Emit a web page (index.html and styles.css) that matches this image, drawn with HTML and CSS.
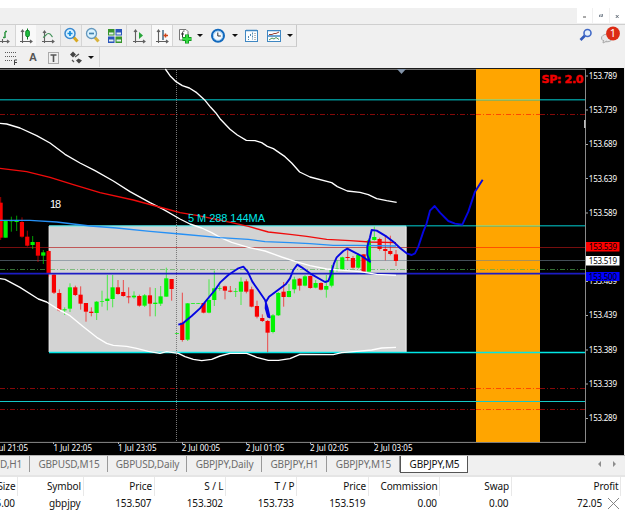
FILE: index.html
```html
<!DOCTYPE html>
<html lang="en">
<head>
<meta charset="utf-8">
<title>GBPJPY,M5</title>
<link rel="stylesheet" href="styles.css">
</head>
<body>
<div class="terminal">
  <div class="margin"></div>
  <div class="titlebar">
    <button class="winbtn"><svg width="15" height="15"><path d="M6 9h3" stroke="#555"/></svg></button>
    <button class="winbtn"><svg width="15" height="15"><path d="M6.500 9v-2h2.500M7.500 8.500h2v-2.500" fill="none" stroke="#77818d" stroke-width=".9"/></svg></button>
    <button class="winbtn"><svg width="15" height="15"><path d="M5.800 7l2.800 3M8.600 7l-2.800 3" stroke="#444f5c" stroke-width=".8"/></svg></button>
  </div>
  <div class="toolbar">
    <div class="tools">
      <span class="tool"><svg width="15" height="20"><g class="axis"><path d="M0 15.500h9M2.500 13v4M7 14l2 1.500L7 17"/></g><path class="grn" d="M5 6v6M5 5.500h2M3 11.500h2"/></svg></span>
      <span class="tool on"><svg width="21" height="20"><g class="axis"><path d="M6.500 4v13M4 15.500h12M5 6l1.500-2L8 6M14 14l2 1.500L14 17"/></g><path d="M11.500 2.500v11" stroke="#0a7a20"/><rect x="9.800" y="4.500" width="3.500" height="6" rx="1" fill="#20c040" stroke="#078020"/></svg></span>
      <span class="tool"><svg width="23" height="20"><g class="axis"><path d="M7.500 5v12M5 15.500h12M6 7l1.500-2L9 7M15 14l2 1.500-2 1.500"/></g><path d="M6 11.500c3-1 3-4 5.500-4s2.500 2 4 3.500" fill="none" stroke="#43925a" stroke-width="1.200"/></svg></span>
      <span class="tool on zoomin"><svg width="21" height="20"><path d="M12.500 11l4 4.500" stroke="#d8a821" stroke-width="3"/><circle cx="9" cy="7.500" r="5" fill="#d9f2ff" stroke="#3988cf" stroke-width="1.500"/><path d="M6.500 7.500h5M9 5v5" stroke="#168cdc" stroke-width="1.700"/></svg></span>
      <span class="tool"><svg width="22" height="20"><path d="M12.500 11l4 4.500" stroke="#d8b23b" stroke-width="3"/><circle cx="9.500" cy="7.500" r="5" fill="#d9f2ff" stroke="#6497bd" stroke-width="1.300"/><path d="M7 7.500h5" stroke="#4283af" stroke-width="1.700"/></svg></span>
      <span class="tool"><svg width="23" height="20"><path fill="#37942b" d="M4 3h6.500v6.500H4zM11.500 10.500H18V17h-6.500z"/><path fill="#2854bb" d="M11.500 3H18v6.500h-6.500zM4 10.500h6.500V17H4z"/><path d="M5 7.500h4.500M12.500 7.500H17M5 14.500h4.500M12.500 14.500H17" stroke="#e4f0ed" stroke-width="2"/></svg></span>
      <span class="tool sep"><svg width="25" height="20"><g class="axis"><path d="M8.500 4v13M6 15.500h12M7 6l1.500-2L10 6M16 14l2 1.500-2 1.500"/></g><path d="M12 6l4 3.500-4 3.500z" fill="#28a53a"/></svg></span>
      <span class="tool on"><svg width="21" height="20"><g class="axis"><path d="M6.500 4v13M4 15.500h12M5 6l1.500-2L8 6M14 14l2 1.500-2 1.500"/></g><path d="M11 4v10" stroke="#416782" stroke-width="1.500"/><path d="M11.500 9.500h4.500M13.500 7.500v4" stroke="#d04416" stroke-width="1.500"/></svg></span>
      <span class="tool sep"><svg width="22" height="20"><path d="M6.500 3.500H13l2 2V14H6.500z" fill="#fff" stroke="#777"/><path d="M11.500 5c-2 0-2 1-2 3v3.500M8 8h3" fill="none" stroke="#333"/><path d="M14 8.500v9M9.500 13h9" stroke="#078b16" stroke-width="4"/><path d="M14 9v8M10 13h8" stroke="#36dc42" stroke-width="2.400"/></svg></span>
      <span class="tool"><i class="caret"></i></span>
      <span class="tool"><svg width="23" height="20"><circle cx="12" cy="9.800" r="6" fill="#f5faff" stroke="#1269bd" stroke-width="2"/><circle cx="12" cy="9.800" r="4.600" fill="none" stroke="#8cc2ec" stroke-width=".8"/><path d="M11.800 6.500v3.500h3" fill="none" stroke="#333"/></svg></span>
      <span class="tool"><i class="caret"></i></span>
      <span class="tool"><svg width="22" height="20"><rect x="5.500" y="4.500" width="12" height="11" fill="#fafdff" stroke="#3f87c2"/><path d="M6 4.500h11" stroke="#3f87c2" stroke-width="1.500"/><path d="M8.500 10v4M10.500 8v3M12.500 6.500v7" stroke="#5288b0" stroke-dasharray="2 1"/><path d="M15 7v7" stroke="#777" stroke-dasharray="1 1"/></svg></span>
      <span class="tool"><svg width="21" height="20"><rect x="4.500" y="4.500" width="13" height="11" fill="#fafdff" stroke="#3f87c2"/><path d="M4.500 4.700h13M4.500 10h13" stroke="#3f87c2" stroke-width="1.300"/><path d="M6 8.500h3l2-1h2l3-1.500" fill="none" stroke="#9b4333"/><path d="M6 14l3-2 2 1 2-1.500 3 2" fill="none" stroke="#50945b"/></svg></span>
      <span class="tool"><i class="caret"></i></span>
    </div>
    <svg class="search" width="16" height="20"><path d="M7 10.500L2.500 15" stroke="#315abb" stroke-width="2.600"/><circle cx="9.500" cy="8" r="3.500" fill="#e5f0fb" stroke="#426ac7" stroke-width="1.600"/></svg>
    <svg class="alerts" width="24" height="22"><ellipse cx="7" cy="13" rx="5.500" ry="3.800" fill="#e7e7e7" stroke="#aaa"/><path d="M3.500 15l-.5 3 4-2" fill="#e7e7e7" stroke="#aaa"/><circle cx="13" cy="8.500" r="6.900" fill="#dc2c15"/><text x="13" y="12.300" class="count">1</text></svg>
  </div>
  <div class="toolbar second">
    <div class="drawtools">
      <svg width="20" height="19"><path d="M5 4.500h12M5 8.500h12M5 12.500h7" stroke="#5b5b5b" stroke-dasharray="1 1"/><path d="M14.500 17v-5H17M14.500 14.500H17" fill="none" stroke="#444"/></svg>
      <span class="letter">A</span>
      <svg width="14" height="19"><rect x="2.500" y="4.500" width="10" height="11" fill="none" stroke="#666" stroke-dasharray="1 1"/><path d="M4.500 7h6M7.500 7v7" stroke="#555" stroke-width="1.600"/></svg>
      <svg width="16" height="19"><path d="M4 3.500l3 3L4 9.500 1 6.500zM9.500 10.500l3.500 2-3 3-3-3z" fill="#454545"/><path d="M3 12l2 2M6 9l4-3" stroke="#555" stroke-width="1.300"/></svg>
      <i class="caret"></i>
    </div>
  </div>
  <svg class="chart" width="625" height="388" viewBox="0 67 625 388">
    <rect y="68" width="624" height="387" fill="#000"/>
    <path d="M0 69.300H585.500V442.400M0 442.400H586" class="frame"/>
    <rect x="49" y="226" width="357.500" height="126" fill="#d3d3d3"/>
    <path d="M49 226V352M406 226V352" stroke="#f2f2f2" stroke-width=".8"/>
    <rect x="476" y="69" width="64" height="373" fill="#ffa500"/>
    <path d="M0 99.800H585" stroke="#008b8e" stroke-width="1.400"/>
    <path d="M406 225.800H585" stroke="#008b8e" stroke-width="1.400"/>
    <path d="M49 225.800H406" stroke="#59edef" stroke-width="1.200"/>
    <path d="M476 99.800H540M476 225.800H540" stroke="#a9c95e" stroke-width="1.400"/>
    <path d="M49 352.500H585" stroke="#00e6e6" stroke-width="1.300"/>
    <path d="M0 401.500H585" stroke="#13c9c9" stroke-width="1.200"/>
    <path d="M0 114.500H585M0 388.500H585M0 409.500H585" class="dash" stroke="#850808"/>
    <path d="M476 114.500H540M476 388.500H540M476 409.500H540" stroke="#ffa500" stroke-width="1.500"/>
    <path d="M476 114.500H540M476 388.500H540M476 409.500H540" class="dash" stroke="#ff4800"/>
    <path d="M0 247.500H585" stroke="#b51515" stroke-opacity=".65"/>
    <path d="M476 247.500H540" stroke="#ff5000"/>
    <path d="M0 260.500H585" stroke="#708090" stroke-opacity=".6"/>
    <path d="M0 269.500H585" class="dash" stroke="#4fae50" stroke-opacity=".65"/>
    <path d="M176.500 70V442" stroke="#777" stroke-dasharray="1 1"/>
    <g id="candles"></g>
    <path d="M0 273.700H585" stroke="#1c1cc4" stroke-width="1.800"/>
    <g class="curve">
      <g stroke="#fff">
        <path transform="translate(150 65) scale(.33333)" d="M46 12L60 32 78 50 97 62 118 69 140 83 165 106 182 127 197 143 210 161 240 193 262 210 289 226 315 227 335 233 352 244 370 251 405 275 425 294 449 321 480 336 545 353 562 365 592 378 630 382 655 389 680 401 710 407 740 412"/>
        <path transform="translate(0 100) scale(.33333)" d="M0 70L20 72 60 84 110 107 150 129 195 163 240 189 285 212 340 243 390 275 450 308 490 328 540 357 570 372 605 384 635 398 660 412 695 427 745 442 795 453 845 471 885 484 930 497 980 507 1030 511 1080 515 1130 523 1188 526"/>
        <path transform="translate(0 200) scale(.33333)" d="M0 236L15 238 60 262 115 297 140 306 170 325 210 347 250 380 290 412 320 430 340 436 380 439 410 445 445 454 480 460 500 455 535 460 555 470 580 478 605 482 635 478 660 468 690 460 740 460 770 472 805 481 835 481 870 476 900 463 1000 464 1025 458 1070 454 1115 450 1145 444 1188 442"/>
      </g>
      <path stroke="#f00b0b" transform="translate(0 100) scale(.33333)" d="M0 205L80 215 150 232 220 254 300 278 400 300 500 327 540 338 595 347 695 368 745 379 805 396 870 403 920 409 980 418 1050 422 1110 426 1188 428"/>
      <path stroke="#2590f5" transform="translate(0 100) scale(.33333)" d="M0 361H90L170 366 270 378 350 384 450 394 540 402 660 413 745 418 795 425 870 428 930 431 1000 436H1070L1188 438"/>
      <path class="pen" transform="translate(165 200) scale(.33333)" d="M40 374L52 371 80 348 105 325 125 300 150 270 165 248 190 225 220 205 235 200 248 215 262 245 278 268 300 300 308 325 314 352 309 350 302 325 303 305 312 290 335 273 362 253 375 235 385 210 397 194 410 202 435 220 480 246 490 243 497 225 507 190 515 172 535 153 547 146 570 158 590 168 615 185 607 165V140L615 112 620 90 635 92 665 110 685 125 705 144 725 160 740 165 750 160 760 140 775 95 785 70 795 32 809 18 825 38 850 63 870 71 892 74 910 35 930-25 953-61"/>
    </g>
    <path d="M397 69h9l-4.500 5z" fill="#8293a8"/>
    <text x="50" y="208" class="note" fill="#fff" textLength="11">18</text>
    <text x="188" y="222" class="note" fill="#00e8e8" textLength="77">5 M 288 144MA</text>
    <text x="541.500" y="83" class="spread" textLength="42">SP: 2.0</text>
    <path d="M584 120h1.500v8H584z" fill="#bbb"/>
    <path d="M586 76h2M586 110h2M586 144.500h2M586 178.500h2M586 213h2M586 281.500h2M586 315.500h2M586 350h2M586 384h2M586 418.500h2M53.500 442v2M118.500 442v2M182.500 442v2M246.500 442v2M310.500 442v2M374.500 442v2" stroke="#aaa"/>
    <g class="label">
      <text x="588.800" y="79" textLength="28.200">153.789</text>
      <text x="588.800" y="113" textLength="28.200">153.739</text>
      <text x="588.800" y="147.300" textLength="28.200">153.689</text>
      <text x="588.800" y="181.500" textLength="28.200">153.639</text>
      <text x="588.800" y="215.800" textLength="28.200">153.589</text>
      <text x="588.800" y="284.200" textLength="28.200">153.489</text>
      <text x="588.800" y="318.400" textLength="28.200">153.439</text>
      <text x="588.800" y="352.700" textLength="28.200">153.389</text>
      <text x="588.800" y="386.900" textLength="28.200">153.339</text>
      <text x="588.800" y="421.100" textLength="28.200">153.289</text>
      <text x="-10.500" y="451" textLength="38.500">1 Jul 21:05</text>
      <text x="53.500" y="451" textLength="38.500">1 Jul 22:05</text>
      <text x="118" y="451" textLength="38.500">1 Jul 23:05</text>
      <text x="181.700" y="451" textLength="38.500">2 Jul 00:05</text>
      <text x="245.800" y="451" textLength="38.500">2 Jul 01:05</text>
      <text x="310" y="451" textLength="38.500">2 Jul 02:05</text>
      <text x="374" y="451" textLength="38.500">2 Jul 03:05</text>
    </g>
    <rect x="586" y="242" width="33.500" height="9.500" fill="#f00"/>
    <rect x="586" y="256" width="33.500" height="9.500" fill="#fff"/>
    <rect x="586" y="272" width="33.500" height="9" fill="#00f"/>
    <g class="label dark">
      <text x="588.800" y="249.800" textLength="28.200">153.539</text>
      <text x="588.800" y="263.800" textLength="28.200">153.519</text>
      <text x="588.800" y="279.800" textLength="28.200">153.500</text>
    </g>
  </svg>
  <div class="tabs">
    <span class="tab first">D,H1</span>
    <span class="tab">GBPUSD,M15</span>
    <span class="tab">GBPUSD,Daily</span>
    <span class="tab">GBPJPY,Daily</span>
    <span class="tab">GBPJPY,H1</span>
    <span class="tab">GBPJPY,M15</span>
    <span class="tab active">GBPJPY,M5</span>
    <svg class="arrows" width="24" height="10"><path d="M5 2v6L2 5zM17 2v6l3-3z" fill="#8d8d8d"/></svg>
  </div>
  <div class="trades">
    <div class="row head"><span>Size</span><span>Symbol</span><span>Price</span><span>S / L</span><span>T / P</span><span>Price</span><span>Commission</span><span>Swap</span><span>Profit</span></div>
    <div class="row"><span>5.00</span><span>gbpjpy</span><span>153.507</span><span>153.302</span><span>153.733</span><span>153.519</span><span>0.00</span><span>0.00</span><span class="profit">72.05<svg width="13" height="13"><path d="M1 1l11 11M12 1L1 12" stroke="#777" stroke-width=".9"/></svg></span></div>
  </div>
</div>
<script src="candles.js"></script>
</body>
</html>
```
FILE: styles.css
```css
* { box-sizing: border-box; }
body { margin: 0; background: #fff; font-family: "Noto Sans", "Open Sans", sans-serif; }
.terminal { display: grid; grid-template-rows: 8px 17px 22px 20px 388px 22px 33px; width: 625px; height: 510px; overflow: hidden; background: #f0f0f0; }
svg { display: block; flex: none; }
.margin { background: #fff; }
.titlebar { display: flex; justify-content: flex-end; gap: 1px; border-bottom: 1px solid #cfcfcf; }
.winbtn { width: 15.5px; height: 15px; padding: 0; border: 0; background: #fff; }
.toolbar { display: flex; }
.tools { display: grid; grid-template-columns: 15px 21px 24px 22px 22px 22px 25px 21px 22px 12px 23px 11px 22px 22px 12px; width: 297px; border-right: 1px solid #c9c9c9; border-bottom: 1px solid #d0d0d0; }
.tool { display: flex; align-items: center; justify-content: center; overflow: hidden; }
.tool.on { background: #f9f9f9; border-left: 1px solid #d5d5d5; }
.tool.zoomin { background: #ededed; border-right: 1px solid #d5d5d5; }
.tool.sep { border-left: 1px solid #d5d5d5; }
.axis { fill: none; stroke: #606060; stroke-width: 1.1; }
.grn { fill: none; stroke: #2c9440; stroke-width: 1.5; }
.caret { border: 3px solid transparent; border-top-color: #111; border-bottom: 0; }
.search { margin-left: 281px; }
.alerts { margin-left: 6px; }
.count { font: 11px "Noto Sans", sans-serif; fill: #fff; text-anchor: middle; }
.drawtools { display: flex; align-items: center; width: 100px; border-right: 1px solid #d6d6d6; }
.letter { width: 26px; text-align: center; font: bold 11px "Liberation Sans", sans-serif; color: #555; }
.drawtools svg + svg { margin-left: 9px; }
.drawtools .caret { margin-left: 3px; }
.frame { fill: none; stroke: #8a8a8a; }
.dash { stroke-dasharray: 5 2 1 2; }
.curve path { fill: none; vector-effect: non-scaling-stroke; stroke-width: 1.35; stroke-linejoin: round; }
.curve .pen { stroke: #0606e2; stroke-width: 1.9; }
.up { fill: #00f400; }
.down { fill: #f80000; }
.wick { fill-opacity: .65; }
.note { font: 11px "Liberation Sans", sans-serif; }
.spread { font: 900 11px "DejaVu Sans", sans-serif; fill: #f00000; stroke: #f00000; stroke-width: .5; }
.label { font-size: 8px; fill: #fff; }
.label.dark { fill: #000; }
.tabs { display: grid; grid-template-columns: 30px 78px 79px 75px 65px 73px 68px 1fr; border-top: 1px solid #b5b5b5; border-bottom: 2px solid #e5e5e5; }
.tab { height: 16px; padding: 1px 0 0 1px; border-right: 1px solid #999; color: #6d6d6d; font-size: 10px; line-height: 14px; text-align: center; white-space: nowrap; letter-spacing: -.15px; }
.tab.first { padding-left: 0; text-align: left; }
.tab.active { border: solid #555; border-width: 0 1px 1px; background: #fff; color: #111; height: 17px; }
.arrows { margin: 3px 5px 0 auto; }
.trades { background: #fff; }
.row { display: grid; grid-template-columns: 18px 65.5px 71px 71.5px 71px 71.5px 71.5px 71.5px 109.500px; height: 16px; font-size: 10px; line-height: 19px; color: #111; }
.row span { display: flex; justify-content: flex-end; padding-right: 3px; white-space: nowrap; letter-spacing: -.1px; }
.row.head { height: 17px; }
.row.head span { padding-right: 1.5px; border-right: 1px solid #e8e8e8; }
.row .profit { gap: 5px; padding-right: 1px; }
.profit svg { margin: 3px 0 0; }
```
FILE: candles.js
```js
// Each candle: x centre, high, open/close top, open/close bottom, low, direction.
// Values are thirds of a pixel, with y measured from the 200px level.
const series = [
  [2,-9,8,113,120,0],[17,62,62,113,113,1],[34,50,62,64,95,1],[50,47,62,66,93,1],
  [66,52,66,110,113,0],[82,92,110,137,140,0],[98,108,126,135,147,1],[114,126,126,167,186,0],
  [130,150,157,167,192,1],[146,150,153,221,230,0],[162,221,224,278,282,0],[178,268,279,331,334,0],
  [194,322,328,331,345,1],[210,250,262,326,336,1],[226,257,262,285,288,0],[242,259,284,311,329,0],
  [258,309,309,335,365,0],[274,322,335,339,349,0],[290,303,305,339,360,1],[306,272,303,305,320,1],
  [322,225,296,303,331,1],[338,225,262,297,322,1],[354,240,262,282,284,0],[370,240,276,288,290,0],
  [386,262,289,292,310,0],[402,274,287,292,296,1],[418,284,288,317,320,0],[434,282,286,317,321,1],
  [450,262,286,311,349,0],[466,264,308,312,349,1],[482,258,289,311,318,1],[499,203,235,290,290,1],
  [515,237,237,267,302,0],[531,400,400,402,402,1],[547,278,368,420,425,0],[563,309,310,419,423,1],
  [579,309,309,311,311,1],[595,309,309,311,311,1],[611,309,309,338,340,0],[627,238,300,338,340,1],
  [643,212,265,300,318,1],[659,256,264,266,272,1],[675,257,259,272,298,0],[691,258,272,275,277,0],
  [707,264,274,276,291,1],[723,232,245,275,315,1],[739,238,244,275,280,0],[755,260,268,320,322,0],
  [771,302,318,350,355,0],[787,343,354,363,366,0],[803,360,363,398,457,0],[819,342,346,396,400,1],
  [835,276,279,346,348,1],[851,246,275,291,320,0],[867,252,273,291,292,1],[883,230,238,268,280,1],
  [899,234,236,257,272,0],[915,225,229,257,259,1],[931,226,228,264,266,0],[947,240,249,263,265,1],
  [963,247,249,269,271,0],[979,225,258,269,293,1],[995,195,208,257,262,1],[1011,180,206,208,215,1],
  [1027,170,172,207,212,1],[1043,148,171,174,182,0],[1059,168,174,203,206,0],[1075,160,165,203,206,1],
  [1091,163,163,215,216,0],[1107,118,121,215,217,1],[1123,80,111,120,122,1],[1139,113,117,147,152,0],
  [1156,107,147,153,181,0],[1171,107,153,162,166,0],[1188,150,163,183,198,0]
];
document.getElementById("candles").innerHTML = series.map(([x, high, top, bottom, low, up]) => {
  const px = v => (v / 3).toFixed(2);
  const cls = up ? "up" : "down";
  return `<rect class="${cls} wick" x="${px(x - 1.5)}" y="${px(600 + high)}" width="1" height="${px(low - high)}"/>` +
    `<rect class="${cls}" x="${px(x - 6.5)}" y="${px(600 + top)}" width="4.2" height="${px(Math.max(bottom - top, 2))}"/>`;
}).join("");
```
